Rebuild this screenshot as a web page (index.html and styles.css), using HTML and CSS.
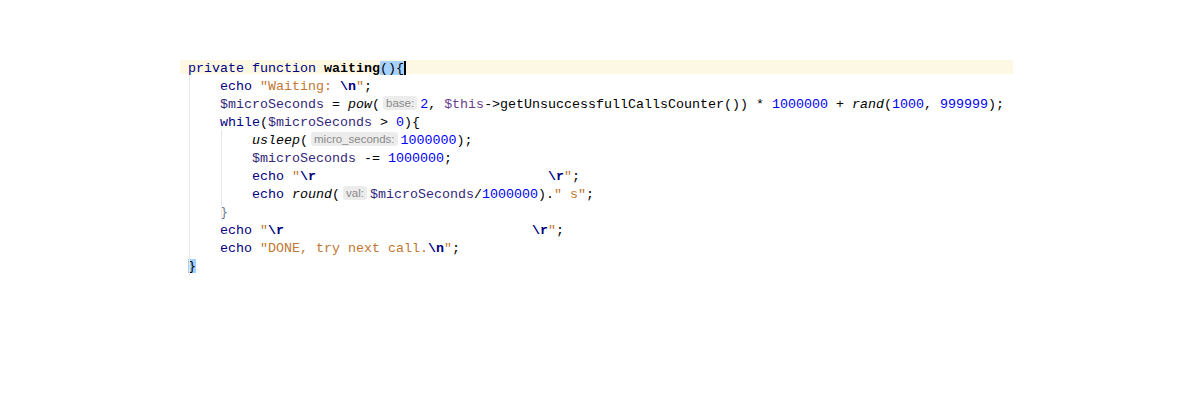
FILE: index.html
```html
<!DOCTYPE html>
<html>
<head>
<meta charset="utf-8">
<link rel="stylesheet" href="styles.css">
</head>
<body>
<div class="editor">
  <div class="guide g1"></div>
  <div class="guide g2"></div>
  <div class="line current"><span class="kw">private function </span><span class="fn-decl">waiting</span><span class="match">(){</span><span class="caret"></span></div>
  <div class="line">    <span class="kw">echo </span><span class="str">"Waiting: </span><span class="esc">\n</span><span class="str">"</span>;</div>
  <div class="line">    <span class="var">$microSeconds</span> = <span class="call">pow</span>(<span class="hint">base:</span><span class="num">2</span>, <span class="this">$this</span>-&gt;getUnsuccessfullCallsCounter()) * <span class="num">1000000</span> + <span class="call">rand</span>(<span class="num">1000</span>, <span class="num">999999</span>);</div>
  <div class="line">    <span class="kw">while</span>(<span class="var">$microSeconds</span> &gt; <span class="num">0</span>){</div>
  <div class="line">        <span class="call">usleep</span>(<span class="hint">micro_seconds:</span><span class="num">1000000</span>);</div>
  <div class="line">        <span class="var">$microSeconds</span> -= <span class="num">1000000</span>;</div>
  <div class="line">        <span class="kw">echo </span><span class="str">"</span><span class="esc">\r</span><span class="str">                             </span><span class="esc">\r</span><span class="str">"</span>;</div>
  <div class="line">        <span class="kw">echo </span><span class="call">round</span>(<span class="hint">val:</span><span class="var">$microSeconds</span>/<span class="num">1000000</span>).<span class="str">" s"</span>;</div>
  <div class="line">    <span class="dim">}</span></div>
  <div class="line">    <span class="kw">echo </span><span class="str">"</span><span class="esc">\r</span><span class="str">                               </span><span class="esc">\r</span><span class="str">"</span>;</div>
  <div class="line">    <span class="kw">echo </span><span class="str">"DONE, try next call.</span><span class="esc">\n</span><span class="str">"</span>;</div>
  <div class="line"><span class="match">}</span></div>
</div>
</body>
</html>
```
FILE: styles.css
```css
html, body {
  margin: 0;
  padding: 0;
  background: #ffffff;
}

body {
  padding-top: 60px;
}

.editor {
  position: relative;
  margin-left: 180px;
  width: 833px;
  padding-left: 8px;
  box-sizing: border-box;
  font-family: "Liberation Mono", "Courier New", monospace;
  font-size: 13.33px;
  color: #000000;
}

.line {
  height: 18px;
  line-height: 18px;
  white-space: pre;
}

.line.current {
  margin-left: -8px;
  padding-left: 8px;
  background: linear-gradient(#fdf8e4, #fdf8e4) 0 0 / 100% 14px no-repeat;
}

.guide {
  position: absolute;
  width: 1px;
  background: #e6e6e6;
}

.g1 {
  left: 9px;
  top: 16px;
  height: 234px;
}

.g2 {
  left: 41px;
  top: 70px;
  height: 90px;
}

.kw { color: #000080; }
.fn-decl { font-weight: bold; color: #000000; }
.str { color: #c27733; }
.esc { color: #000080; font-weight: bold; }
.num { color: #0000ff; }
.var { color: #33287a; }
.this { color: #6b3d8f; }
.call { font-style: italic; }
.dim { color: #6c7a99; }

.match {
  background: linear-gradient(#a6d2ff, #a6d2ff) 0 0 / 100% 14px no-repeat;
}

.caret {
  display: inline-block;
  width: 2px;
  height: 14px;
  background: #000000;
  vertical-align: -3px;
}

.hint {
  display: inline-block;
  font-family: "Liberation Sans", Arial, sans-serif;
  font-size: 11.5px;
  line-height: 14px;
  color: #8a8a8a;
  background: #ececec;
  border-radius: 3px;
  padding: 0 3px;
  margin: 0 3px;
  vertical-align: 1px;
}
```
